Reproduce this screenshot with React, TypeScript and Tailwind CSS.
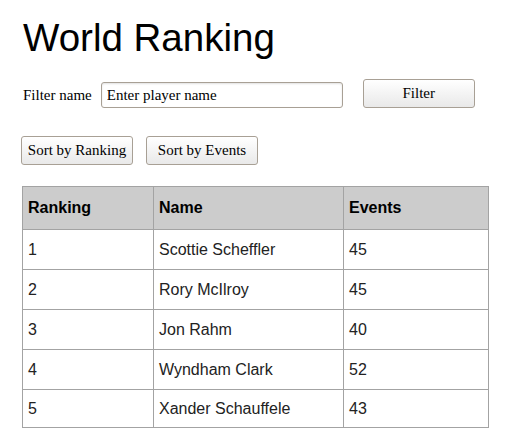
import { useState } from 'react'

const players = [
	{ ranking: 1, name: 'Scottie Scheffler', events: 45 },
	{ ranking: 2, name: 'Rory McIlroy', events: 45 },
	{ ranking: 3, name: 'Jon Rahm', events: 40 },
	{ ranking: 4, name: 'Wyndham Clark', events: 52 },
	{ ranking: 5, name: 'Xander Schauffele', events: 43 },
]

const btn =
	'h-[29px] rounded-[3px] border border-[#a8a095] bg-gradient-to-b from-white to-[#e9e9e9] text-[15px] text-black font-["Liberation_Serif",serif] leading-none'

export default function App() {
	const [query, setQuery] = useState('Enter player name')

	return (
		<div className="min-h-screen bg-white pl-[22px] pt-[16px] font-['Liberation_Sans',Arial,sans-serif]">
			<h1 className="text-[38.5px] leading-[44px] text-black ml-[1px]">World Ranking</h1>

			{/* filter */}
			<div className="flex items-start mt-[19px] font-['Liberation_Serif',serif] text-[15px]">
				<label className="mt-[8px] ml-[1px] leading-[17px] text-black">Filter name</label>
				<input
					value={query}
					onChange={(e) => setQuery(e.target.value)}
					className="ml-[9px] mt-[3px] w-[242px] h-[26px] px-[5px] rounded-[3px] border border-[#a8a095] bg-white text-[15px] text-black shadow-[inset_0_1px_2px_rgba(0,0,0,0.12)] outline-none"
				/>
				<button className={`${btn} ml-[20px] w-[112px]`}>Filter</button>
			</div>

			{/* sort */}
			<div className="flex gap-[13px] mt-[28px] ml-[-1px]">
				<button className={`${btn} w-[112px]`}>Sort by Ranking</button>
				<button className={`${btn} w-[112px]`}>Sort by Events</button>
			</div>

			<table className="mt-[21px] w-[467px] border-collapse text-[16px] text-left">
				<thead>
					<tr className="h-[43px] bg-[#cccccc]">
						<th className="w-[131px] border border-[#a3a3a3] px-[5px] font-bold text-black">Ranking</th>
						<th className="w-[190px] border border-[#a3a3a3] px-[5px] font-bold text-black">Name</th>
						<th className="border border-[#a3a3a3] px-[5px] font-bold text-black">Events</th>
					</tr>
				</thead>
				<tbody>
					{players.map((p, i) => (
						<tr key={p.ranking} className={i === players.length - 1 ? 'h-[38px]' : 'h-[40px]'}>
							<td className="border border-[#a3a3a3] px-[5px] text-[#222]">{p.ranking}</td>
							<td className="border border-[#a3a3a3] px-[5px] text-[#222]">{p.name}</td>
							<td className="border border-[#a3a3a3] px-[5px] text-[#222]">{p.events}</td>
						</tr>
					))}
				</tbody>
			</table>
		</div>
	)
}
